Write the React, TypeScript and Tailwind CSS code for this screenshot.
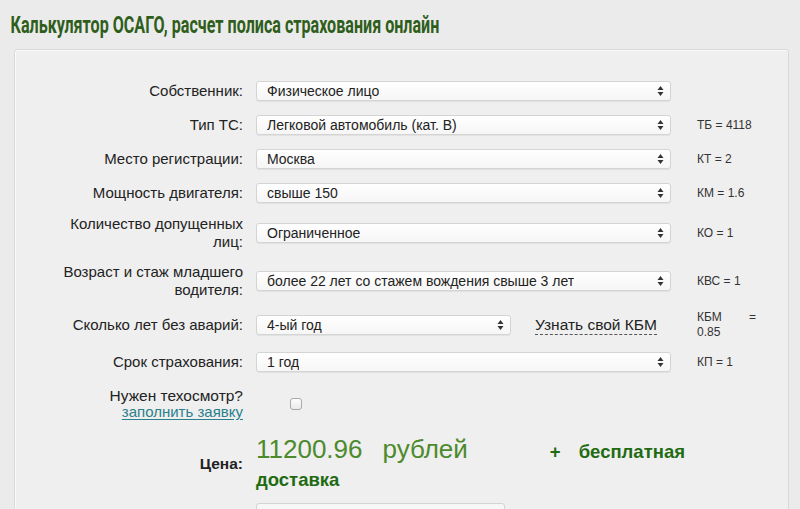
import React from 'react';

type Row = {
  label: React.ReactNode;
  value: string;
  coef?: React.ReactNode;
  h: string;
};

function FakeSelect({ value, className = 'w-[415px]' }: { value: string; className?: string }) {
  return (
    <div
      className={`relative flex h-[20px] items-center rounded-[3px] border border-[#d4d4d4] bg-gradient-to-b from-white to-[#f6f6f6] pl-[10px] pr-6 text-[14px] text-[#222] shadow-[0_1px_1px_rgba(0,0,0,0.06)] ${className}`}
    >
      <span className="truncate">{value}</span>
      <svg className="absolute right-[6px] top-1/2 -translate-y-1/2" width="7" height="11" viewBox="0 0 7 11">
        <path d="M3.5 0.5 L6.5 4.5 L0.5 4.5 Z" fill="#333" />
        <path d="M3.5 10.5 L6.5 6.5 L0.5 6.5 Z" fill="#333" />
      </svg>
    </div>
  );
}

const rows: Row[] = [
  { label: 'Собственник:', value: 'Физическое лицо', h: 'h-[34px]' },
  { label: 'Тип ТС:', value: 'Легковой автомобиль (кат. B)', coef: 'ТБ = 4118', h: 'h-[34px]' },
  { label: 'Место регистрации:', value: 'Москва', coef: 'КТ = 2', h: 'h-[34px]' },
  { label: 'Мощность двигателя:', value: 'свыше 150', coef: 'КМ = 1.6', h: 'h-[34px]' },
  {
    label: (
      <>
        Количество допущенных
        <br />
        лиц:
      </>
    ),
    value: 'Ограниченное',
    coef: 'КО = 1',
    h: 'h-[46px]',
  },
  {
    label: (
      <>
        Возраст и стаж младшего
        <br />
        водителя:
      </>
    ),
    value: 'более 22 лет со стажем вождения свыше 3 лет',
    coef: 'КВС = 1',
    h: 'h-[50px]',
  },
];

export default function App() {
  return (
    <div className="h-[509px] overflow-hidden bg-[#ebebeb] font-['Liberation_Sans',Arial,sans-serif] text-[#222]">
      <h1 className="w-max origin-left scale-x-[0.70] pl-[15px] pt-[12px] font-['Roboto',sans-serif] text-[23px] font-bold leading-[28px] text-[#2f5e1c]">
        Калькулятор ОСАГО, расчет полиса страхования онлайн
      </h1>

      <div className="ml-[14px] mt-[9px] w-[775px] rounded-t-[3px] border border-[#d9d9d9] bg-[#efefef] pb-6 pt-[24px] shadow-[inset_1px_1px_0_#fafafa]">
        <div className="flex flex-col pl-[47px]">
          {rows.map((r, i) => (
            <div key={i} className={`grid grid-cols-[181px_415px_80px] items-center gap-x-[13px] ${r.h}`}>
              <div className="text-right text-[15px] leading-[18px]">{r.label}</div>
              <FakeSelect value={r.value} />
              <div className="whitespace-nowrap pl-[13px] text-[12px] text-[#333]">{r.coef}</div>
            </div>
          ))}

          {/* КБМ */}
          <div className="grid h-[38px] grid-cols-[181px_415px_80px] items-center gap-x-[13px]">
            <div className="text-right text-[15px] leading-[18px]">Сколько лет без аварий:</div>
            <div className="flex items-center">
              <FakeSelect value="4-ый год" className="w-[255px]" />
              <a className="ml-[24px] border-b border-dashed border-[#555] text-[15.5px] leading-[18px] text-[#222]">
                Узнать свой КБМ
              </a>
            </div>
            <div className="w-[72px] pl-[13px] text-[12px] leading-[15px] text-[#333]">
              <div className="flex justify-between">
                <span>КБМ</span>
                <span>=</span>
              </div>
              <div>0.85</div>
            </div>
          </div>

          <div className="grid h-[36px] grid-cols-[181px_415px_80px] items-center gap-x-[13px]">
            <div className="text-right text-[15px] leading-[18px]">Срок страхования:</div>
            <FakeSelect value="1 год" />
            <div className="pl-[13px] text-[12px] text-[#333]">КП = 1</div>
          </div>

          {/* техосмотр */}
          <div className="grid h-[48px] grid-cols-[181px_415px_80px] items-center gap-x-[13px]">
            <div className="whitespace-nowrap text-right text-[15.5px] leading-[16px]">
              <div>Нужен техосмотр?</div>
              <a className="text-[15px] text-[#2b7f8c] underline underline-offset-2">заполнить заявку</a>
            </div>
            <div className="flex items-center">
              <span className="ml-[34px] h-[12px] w-[12px] rounded-[3px] border border-[#a9a9a9] bg-gradient-to-b from-[#fdfdfd] to-[#e9e9e9]" />
            </div>
            <div />
          </div>

          {/* Цена */}
          <div className="grid h-[72px] grid-cols-[181px_490px] items-center gap-x-[13px]">
            <div className="text-right text-[15.5px] font-bold">Цена:</div>
            <div>
              <div className="flex items-baseline">
                <span className="text-[26px] leading-[30px] text-[#4c8a2c]">11200.96</span>
                <span className="ml-[20px] text-[26px] leading-[30px] text-[#4c8a2c]">рублей</span>
                <span className="ml-[82px] text-[18.5px] font-bold text-[#1f6b12]">+</span>
                <span className="ml-[18px] text-[18.5px] font-bold text-[#1f6b12]">бесплатная</span>
              </div>
              <div className="text-[18.5px] font-bold leading-[28px] text-[#1f6b12]">доставка</div>
            </div>
          </div>

          <div className="ml-[194px] mt-[3px] h-[24px] w-[249px] rounded-[3px] border border-[#d4d4d4] bg-[#f7f7f7]" />
        </div>
      </div>
    </div>
  );
}
